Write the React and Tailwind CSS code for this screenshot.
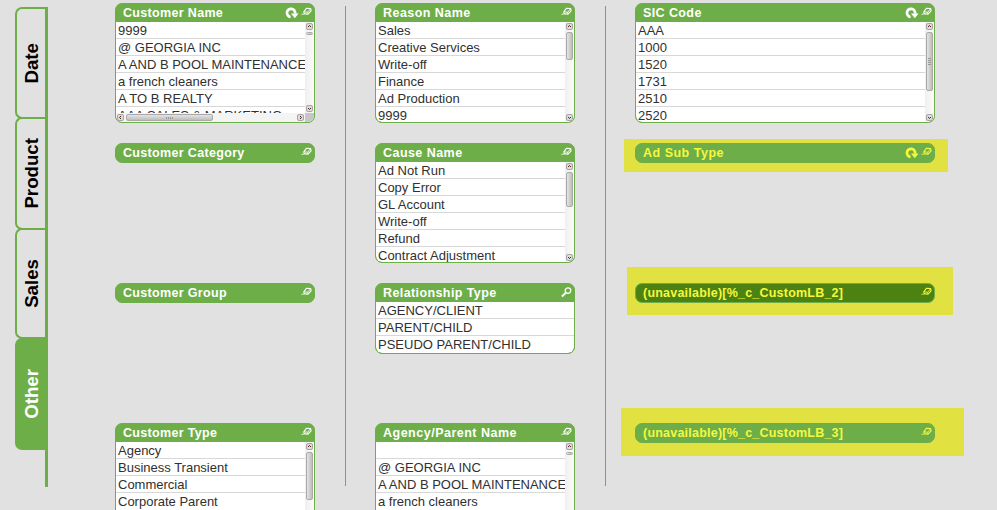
import React from "react";

const TABS = [
  { label: "Date", box: "h-[112px]" },
  { label: "Product", box: "-mt-[2px] h-[113px]" },
  { label: "Sales", box: "-mt-[2px] h-[111px]" },
  { label: "Other", box: "-mt-[1px] h-[112px]", active: true },
];

function Eraser() {
  return (
    <svg width="11" height="9" viewBox="0 0 11 9" fill="none" stroke="currentColor" strokeWidth="1.1" strokeLinejoin="round">
      <path d="M2.8 4.8 5.6 1.2 9.6 1.6 10.1 3.8 7 7.2 3.2 6.6Z" />
      <path d="M3 4.8 6.6 5.2 9.6 1.8M6.6 5.2 7 7" strokeWidth=".9" />
      <path d="M.3 7.2h3" opacity=".7" />
    </svg>
  );
}

function Magnifier() {
  return (
    <svg width="11" height="11" viewBox="0 0 11 11" fill="none" stroke="currentColor">
      <circle cx="7" cy="3.6" r="2.8" strokeWidth="1.3" />
      <path d="M4.9 5.7.9 9.4" strokeWidth="2" />
    </svg>
  );
}

function Cycle() {
  return (
    <svg width="14" height="12" viewBox="0 0 14 12" fill="none">
      <path d="M5.6 10A4.1 4.1 0 1 1 10.1 6.6" stroke="currentColor" strokeWidth="2.7" />
      <path d="M6 6.6H13.6L9.8 11.2Z" fill="currentColor" />
    </svg>
  );
}

function ArrowButton({ dir }) {
  const d = { up: "M2 4 3.5 2.5 5 4", down: "M2 3 3.5 4.5 5 3", left: "M4 2 2.5 3.5 4 5", right: "M3 2 4.5 3.5 3 5" }[dir];
  return (
    <div className="h-[7px] w-[7px] shrink-0 rounded-[2px] bg-[#dcdcdc] outline outline-1 -outline-offset-1 outline-[#a6a6a6]">
      <svg width="7" height="7" viewBox="0 0 7 7" fill="none" stroke="#5a2020" className="block">
        <path d={d} />
      </svg>
    </div>
  );
}

function VScroll({ thumb, grip, bottom = true }) {
  return (
    <div className="flex w-[9px] shrink-0 flex-col items-center bg-gradient-to-r from-[#efefef] to-[#fbfbfb] pt-px pb-px">
      <ArrowButton dir="up" />
      <div className={"mt-[2px] flex w-[7px] shrink-0 flex-col items-center justify-center gap-px rounded-[2px] border border-[#a9a9a9] bg-gradient-to-r from-[#e4e4e4] to-[#bdbdbd] " + thumb}>
        {grip && [0, 1, 2, 3].map((i) => <i key={i} className="block h-px w-[3px] bg-[#999]" />)}
      </div>
      <div className="flex-1" />
      {bottom && <ArrowButton dir="down" />}
    </div>
  );
}

function HScroll() {
  return (
    <div className="flex h-[9px] shrink-0 items-center bg-[#f4f4f4]">
      <div className="flex h-full flex-1 items-center pl-px">
        <ArrowButton dir="left" />
        <div className="ml-[2px] flex h-[7px] w-[87px] items-center justify-center gap-px rounded-[2px] border border-[#a9a9a9] bg-gradient-to-b from-[#e4e4e4] to-[#bdbdbd]">
          {[0, 1, 2, 3].map((i) => <i key={i} className="block h-[2px] w-px bg-[#999]" />)}
        </div>
        <div className="flex-1" />
        <ArrowButton dir="right" />
      </div>
      <div className="ml-px h-full w-[9px] bg-[#c6c6c6]" />
    </div>
  );
}

function ListBox({ title, track = "tracking-[.33px]", rows, height, scroll, hscroll, cycle, search, mark, dark }) {
  const tone = mark ? "text-[#f6f83c]" : "text-white";
  return (
    <div className="h-[140px] shrink-0">
      <div className="relative">
        {mark && <div className={"absolute bg-[#e2e142] " + mark} />}
        <section className={"relative flex flex-col overflow-hidden rounded-[7px] border border-[#6eae49] " + height + (dark ? " bg-[#4c8211]" : " bg-[#6eae49]")}>
          <header className={"flex h-[18px] shrink-0 pl-[7px] pr-[2px] " + tone}>
            <h2 className={"flex-1 whitespace-nowrap text-[12.5px] leading-[18px] font-bold " + track}>{title}</h2>
            {cycle && <span className="mt-[3px] mr-[2px]"><Cycle /></span>}
            <span className="mt-[3px]">{search ? <Magnifier /> : <Eraser />}</span>
          </header>
          {rows && (
            <div className={"flex min-h-0 flex-1 overflow-hidden bg-white " + (hscroll ? "" : "rounded-b-[6px]")}>
              <ul className="min-w-0 flex-1 overflow-hidden">
                {rows.map((r, i) => (
                  <li key={i} className="h-[17px] overflow-hidden border-b border-[#d8d8d8] pl-[2px] text-[13px] leading-[17px] whitespace-nowrap text-[#303030] last:border-b-0">{r}</li>
                ))}
              </ul>
              {scroll && <VScroll {...scroll} />}
            </div>
          )}
          {hscroll && <HScroll />}
        </section>
      </div>
    </div>
  );
}

export default function App() {
  return (
    <div className="flex h-[510px] w-[997px] overflow-hidden bg-[#e1e1e1] font-['Liberation_Sans',Arial,sans-serif]">
      <nav className="ml-[15px] mt-[7px] flex h-[480px] w-[33px] shrink-0 flex-col border-r-[3px] border-[#6eae49]">
        {TABS.map((t) => (
          <div key={t.label} className={"flex shrink-0 items-center justify-center rounded-l-[7px] border-2 border-r-0 border-[#6eae49] pl-[2px] " + t.box + (t.active ? " bg-[#6eae49] text-white" : " text-black")}>
            <span className="rotate-180 text-[18.7px] leading-[20px] font-bold [writing-mode:vertical-rl]">{t.label}</span>
          </div>
        ))}
      </nav>

      <main className="ml-[67px] flex pt-[3px]">
        <div className="w-[200px]">
          <ListBox title="Customer Name" height="h-[120px]" cycle hscroll
            scroll={{ thumb: "h-[3px]" }}
            rows={["9999", "@ GEORGIA INC", "A AND B POOL MAINTENANCE", "a french cleaners", "A TO B REALTY", "AAA SALES & MARKETING"]} />
          <ListBox title="Customer Category" height="h-[20px]" />
          <ListBox title="Customer Group" height="h-[20px]" />
          <ListBox title="Customer Type" height="h-[120px]"
            scroll={{ thumb: "h-[48px]" }}
            rows={["Agency", "Business Transient", "Commercial", "Corporate Parent"]} />
        </div>
        <div className="mx-[30px] mt-[3px] h-[480px] w-px bg-[#6eae49]" />
        <div className="-ml-px w-[200px]">
          <ListBox title="Reason Name" track="tracking-[.45px]" height="h-[120px]"
            scroll={{ thumb: "h-[28px]" }}
            rows={["Sales", "Creative Services", "Write-off", "Finance", "Ad Production", "9999"]} />
          <ListBox title="Cause Name" track="tracking-[.45px]" height="h-[120px]"
            scroll={{ thumb: "h-[35px]" }}
            rows={["Ad Not Run", "Copy Error", "GL Account", "Write-off", "Refund", "Contract Adjustment"]} />
          <ListBox title="Relationship Type" track="tracking-[.4px]" height="h-[71px]" search
            rows={["AGENCY/CLIENT", "PARENT/CHILD", "PSEUDO PARENT/CHILD"]} />
          <ListBox title="Agency/Parent Name" track="tracking-[.5px]" height="h-[120px]"
            scroll={{ thumb: "h-[3px]" }}
            rows={["", "@ GEORGIA INC", "A AND B POOL MAINTENANCE", "a french cleaners"]} />
        </div>
        <div className="mx-[30px] mt-[3px] h-[480px] w-px bg-[#6eae49]" />
        <div className="-ml-px w-[300px]">
          <ListBox title="SIC Code" track="tracking-[.4px]" height="h-[120px]" cycle
            scroll={{ thumb: "h-[59px]", grip: true }}
            rows={["AAA", "1000", "1520", "1731", "2510", "2520"]} />
          <ListBox title="Ad Sub Type" track="tracking-[.5px]" height="h-[20px]" cycle
            mark="-left-[11px] -top-[4px] h-[33px] w-[324px]" />
          <ListBox title="(unavailable)[%_c_CustomLB_2]" track="tracking-[.22px]" height="h-[20px]" dark
            mark="-left-[8px] -top-[16px] h-[48px] w-[326px]" />
          <ListBox title="(unavailable)[%_c_CustomLB_3]" track="tracking-[.22px]" height="h-[20px]"
            mark="-left-[14px] -top-[15px] h-[48px] w-[343px]" />
        </div>
      </main>
    </div>
  );
}
